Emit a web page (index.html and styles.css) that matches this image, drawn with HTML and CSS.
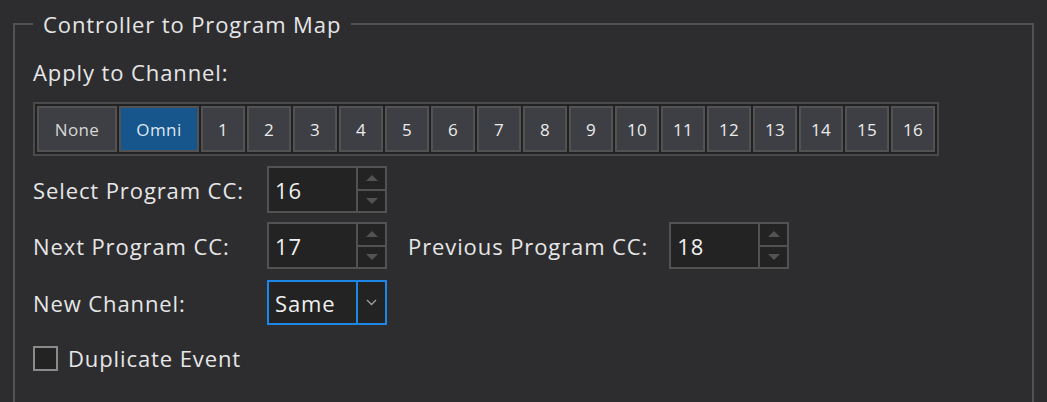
FILE: index.html
```html
<!DOCTYPE html>
<html lang="en">
<head>
    <meta charset="UTF-8">
    <meta name="viewport" content="width=device-width, initial-scale=1.0">
    <title>Controller to Program Map</title>
    <link rel="stylesheet" href="styles.css">
</head>
<body>
    <fieldset class="group">
        <legend>Controller to Program Map</legend>

        <div class="field-label">Apply to Channel:</div>

        <!-- Channel selector strip -->
        <div class="channel-strip">
            <button class="chan chan-wide">None</button>
            <button class="chan chan-wide active">Omni</button>
            <button class="chan">1</button>
            <button class="chan">2</button>
            <button class="chan">3</button>
            <button class="chan">4</button>
            <button class="chan">5</button>
            <button class="chan">6</button>
            <button class="chan">7</button>
            <button class="chan">8</button>
            <button class="chan">9</button>
            <button class="chan">10</button>
            <button class="chan">11</button>
            <button class="chan">12</button>
            <button class="chan">13</button>
            <button class="chan">14</button>
            <button class="chan">15</button>
            <button class="chan">16</button>
        </div>

        <div class="form-row row-select">
            <label class="row-label">Select Program CC:</label>
            <div class="spin">
                <span class="spin-value">16</span>
                <div class="spin-buttons">
                    <span class="spin-btn"><span class="arrow-up"></span></span>
                    <span class="spin-btn"><span class="arrow-down"></span></span>
                </div>
            </div>
        </div>

        <div class="form-row row-next">
            <label class="row-label">Next Program CC:</label>
            <div class="spin">
                <span class="spin-value">17</span>
                <div class="spin-buttons">
                    <span class="spin-btn"><span class="arrow-up"></span></span>
                    <span class="spin-btn"><span class="arrow-down"></span></span>
                </div>
            </div>
            <label class="inline-label">Previous Program CC:</label>
            <div class="spin">
                <span class="spin-value">18</span>
                <div class="spin-buttons">
                    <span class="spin-btn"><span class="arrow-up"></span></span>
                    <span class="spin-btn"><span class="arrow-down"></span></span>
                </div>
            </div>
        </div>

        <div class="form-row row-channel">
            <label class="row-label">New Channel:</label>
            <div class="combo">
                <span class="combo-value">Same</span>
                <span class="combo-toggle">
                    <svg width="11" height="7" viewBox="0 0 11 7"><polyline points="1,1 5.5,5.5 10,1" fill="none" stroke="#a0a0a0" stroke-width="1.3"/></svg>
                </span>
            </div>
        </div>

        <div class="check-row">
            <span class="checkbox"></span>
            <span class="check-label">Duplicate Event</span>
        </div>
    </fieldset>
</body>
</html>
```

FILE: styles.css
```css
* {
    margin: 0;
    padding: 0;
    box-sizing: border-box;
}

html, body {
    height: 100%;
}

body {
    font-family: "Open Sans", "Noto Sans", sans-serif;
    font-size: 22px;
    letter-spacing: 0.9px;
    line-height: 28px;
    color: #e6e6e6;
    background-color: #2d2d30;
    padding: 10px 13px 0 13px;
    overflow: hidden;
}

.group {
    border: 2px solid #525252;
    padding: 20px 18px 60px 18px;
    min-height: 460px;
}

.group legend {
    padding: 0 10px;
    color: #e6e6e6;
}

.field-label {
    margin-bottom: 16px;
}

/* Channel selector */
.channel-strip {
    display: inline-flex;
    gap: 2px;
    padding: 2px;
    border: 2px solid #4a4a4a;
    background-color: #222224;
}

.chan {
    width: 44px;
    height: 46px;
    border: 2px solid #525252;
    background-color: #3e3f44;
    color: #ebebeb;
    font-family: "Open Sans", "Noto Sans", sans-serif;
    font-size: 17px;
    letter-spacing: 0.4px;
    cursor: pointer;
}

.chan-wide {
    width: 80px;
    color: #d6d6d6;
}

.chan.active {
    background-color: #17558d;
    color: #dfe8f0;
}

/* Form rows */
.form-row {
    display: flex;
    align-items: center;
}

.row-select {
    margin-top: 10px;
}

.row-next {
    margin-top: 9px;
}

.row-channel {
    margin-top: 11px;
}

.row-label {
    width: 234px;
}

.inline-label {
    margin: 0 21px;
}

.spin {
    display: flex;
    width: 120px;
    height: 47px;
    border: 2px solid #525252;
    background-color: #232323;
}

.spin-value {
    flex: 1;
    display: flex;
    align-items: center;
    padding-left: 6px;
    color: #f0f0f0;
}

.spin-buttons {
    width: 29px;
    display: flex;
    flex-direction: column;
    border-left: 2px solid #525252;
}

.spin-btn {
    flex: 1;
    display: flex;
    align-items: center;
    justify-content: center;
}

.spin-btn:first-child {
    border-bottom: 2px solid #525252;
}

.arrow-up {
    width: 0;
    height: 0;
    border-left: 6px solid transparent;
    border-right: 6px solid transparent;
    border-bottom: 6px solid #535353;
}

.arrow-down {
    width: 0;
    height: 0;
    border-left: 6px solid transparent;
    border-right: 6px solid transparent;
    border-top: 6px solid #535353;
}

/* Combo box */
.combo {
    display: flex;
    width: 120px;
    height: 45px;
    border: 2px solid #1c87e6;
    background-color: #232323;
}

.combo-value {
    flex: 1;
    display: flex;
    align-items: center;
    padding-left: 6px;
    color: #f0f0f0;
}

.combo-toggle {
    width: 29px;
    display: flex;
    align-items: center;
    justify-content: center;
    border-left: 2px solid #1c87e6;
}

/* Checkbox */
.check-row {
    display: flex;
    align-items: center;
    gap: 10px;
    margin-top: 19px;
}

.checkbox {
    width: 25px;
    height: 25px;
    border: 2px solid #8a8a8a;
    background-color: #232323;
}
```
